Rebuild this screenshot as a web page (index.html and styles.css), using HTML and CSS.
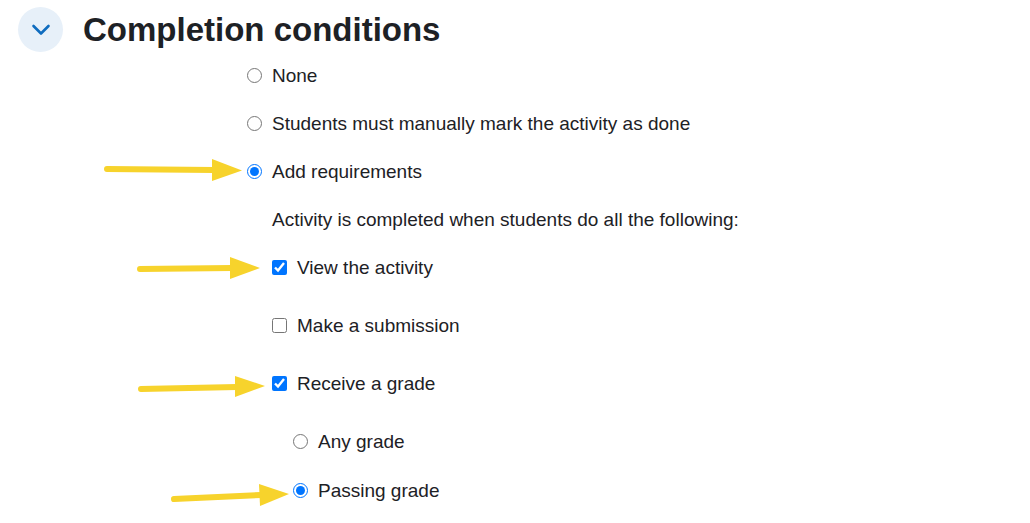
FILE: index.html
```
<!DOCTYPE html>
<html lang="en">
<head>
<meta charset="utf-8">
<title>Completion conditions</title>
<link rel="stylesheet" href="styles.css">
</head>
<body>
<main class="section">
  <header class="section-header">
    <button class="toggle" type="button" aria-label="Collapse Completion conditions" aria-expanded="true">
      <svg width="20" height="14" viewBox="0 0 20 14" aria-hidden="true"><path d="M2.5 3 L10 10.5 L17.5 3" fill="none" stroke="#0f6cbf" stroke-width="2.6" stroke-linecap="round" stroke-linejoin="round"/></svg>
    </button>
    <h1 class="title">Completion conditions</h1>
  </header>
  <form class="options">
    <div class="row"><input class="control" type="radio" name="completion" id="none"><label for="none">None</label></div>
    <div class="row"><input class="control" type="radio" name="completion" id="manual"><label for="manual">Students must manually mark the activity as done</label></div>
    <div class="row"><input class="control" type="radio" name="completion" id="auto" checked><label for="auto">Add requirements</label>
      <svg class="arrow arrow-auto" width="138" height="24" viewBox="0 0 138 24" aria-hidden="true"><path class="shaft" d="M3 11 L110 12"/><path class="head" d="M108 1 L138 12.5 L108 23 Z"/></svg></div>
    <div class="requirements">
      <p class="row hint">Activity is completed when students do all the following:</p>
      <div class="row check"><input class="control" type="checkbox" id="view" checked><label for="view">View the activity</label>
        <svg class="arrow arrow-view" width="123" height="24" viewBox="0 0 123 24" aria-hidden="true"><path class="shaft" d="M3 13 L95 12"/><path class="head" d="M93 1 L123 12 L93 23 Z"/></svg></div>
      <div class="row check"><input class="control" type="checkbox" id="submit"><label for="submit">Make a submission</label></div>
      <div class="row check"><input class="control" type="checkbox" id="grade" checked><label for="grade">Receive a grade</label>
        <svg class="arrow arrow-grade" width="127" height="24" viewBox="0 0 127 24" aria-hidden="true"><path class="shaft" d="M3 14 L99 12"/><path class="head" d="M97 1 L127 11 L97 22 Z"/></svg></div>
      <div class="grades">
        <div class="row grade"><input class="control" type="radio" name="grade" id="any"><label for="any">Any grade</label></div>
        <div class="row grade"><input class="control" type="radio" name="grade" id="passing" checked><label for="passing">Passing grade</label>
          <svg class="arrow arrow-passing" width="118" height="24" viewBox="0 0 118 24" aria-hidden="true"><path class="shaft" d="M3 16 L90 12"/><path class="head" d="M88 1 L118 11 L89 23 Z"/></svg></div>
      </div>
    </div>
  </form>
</main>
</body>
</html>
```
FILE: styles.css
```
* { box-sizing: border-box; }
body {
  margin: 0;
  background: #fff;
  color: #1d2125;
  font-family: "Liberation Sans", Arial, sans-serif;
  font-size: 19px;
  line-height: 27px;
}
.section { padding: 7px 18px 0; }
.section-header { display: flex; align-items: center; gap: 20px; }
.toggle {
  display: flex;
  align-items: center;
  justify-content: center;
  width: 45px;
  height: 45px;
  padding: 0;
  border: 0;
  border-radius: 50%;
  background: #e7f0f9;
}
.title { margin: 0; font-size: 33px; line-height: 39px; }
.options { padding: 10px 0 0 229px; }
.row {
  position: relative;
  display: flex;
  align-items: center;
  gap: 10px;
  margin: 0 0 21px;
}
.control { width: 15px; height: 15px; margin: 0; accent-color: #0075ff; }
.requirements { padding-left: 25px; }
.check { margin-bottom: 31px; }
.grades { padding-left: 21px; }
.grade { margin-bottom: 22px; }
.arrow { position: absolute; right: 100%; top: 0; }
.arrow-auto { margin-right: 5px; }
.arrow-view { margin-right: 12px; top: 2px; }
.arrow-grade { margin-right: 7px; top: 5px; }
.arrow-passing { margin-right: 4px; top: 6px; }
.shaft { fill: none; stroke: #f7d32c; stroke-width: 6; stroke-linecap: round; }
.head { fill: #f7d32c; }
```
